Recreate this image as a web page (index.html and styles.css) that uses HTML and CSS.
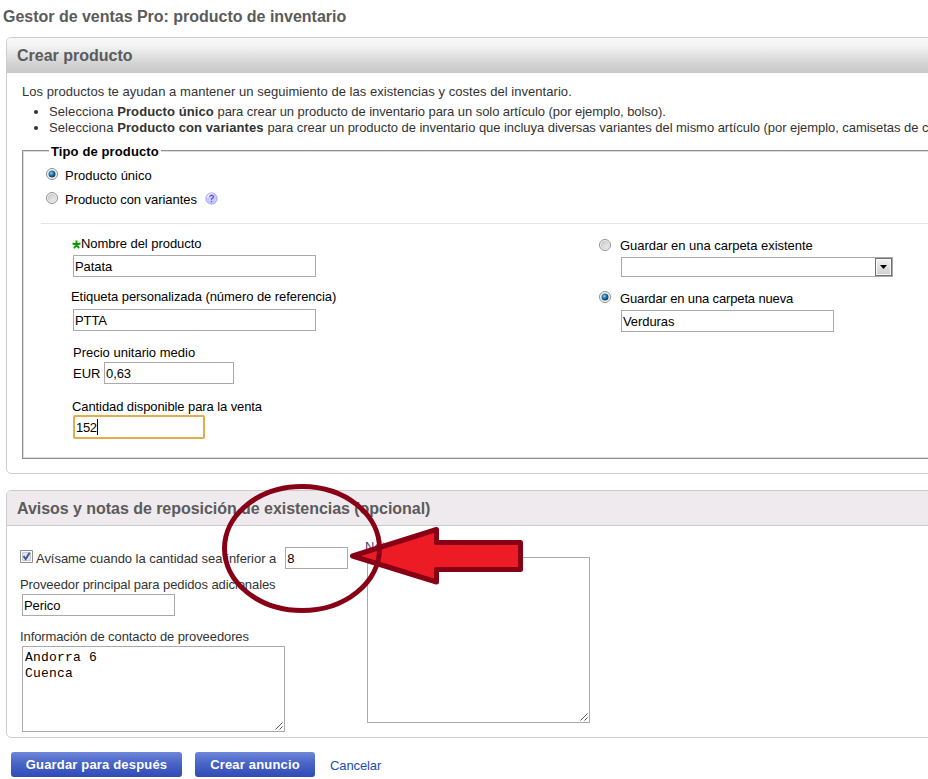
FILE: index.html
```html
<!DOCTYPE html>
<html lang="es">
<head>
<meta charset="utf-8">
<title>Gestor de ventas Pro</title>
<link rel="stylesheet" href="styles.css">
</head>
<body>
<svg class="defs" width="0" height="0">
  <defs>
    <radialGradient id="bead" cx=".4" cy=".38" r=".62"><stop offset="0" stop-color="#8fe0fa"/><stop offset=".4" stop-color="#2b86ba"/><stop offset="1" stop-color="#11365a"/></radialGradient>
    <linearGradient id="hollow" x1="0" y1="0" x2="1" y2="1"><stop offset="0" stop-color="#c4c4c4"/><stop offset="1" stop-color="#f4f4f4"/></linearGradient>
    <symbol id="radio-off" viewBox="0 0 12 12"><circle cx="6" cy="6" r="5.5" fill="#f6f6f6" stroke="#8e8f8f"/><circle cx="6" cy="6" r="3.800" fill="url(#hollow)" stroke="#c8c8c8" stroke-width=".6"/></symbol>
    <symbol id="radio-on" viewBox="0 0 12 12"><circle cx="6" cy="6" r="5.5" fill="#f6f6f6" stroke="#8e8f8f"/><circle cx="6" cy="6" r="3.500" fill="url(#bead)"/></symbol>
  </defs>
</svg>
<h1 class="page-title">Gestor de ventas Pro: producto de inventario</h1>

<section class="panel product">
  <h2 class="panel-head silver">Crear producto</h2>
  <p class="intro">Los productos te ayudan a mantener un seguimiento de las existencias y costes del inventario.</p>
  <ul class="hints">
    <li class="hint-single"><span class="lead">Selecciona <b>Producto único</b> </span>para crear un producto de inventario para un solo artículo (por ejemplo, bolso).</li>
    <li class="hint-multi"><span class="lead">Selecciona <b>Producto con variantes</b> </span>para crear un producto de inventario que incluya diversas variantes del mismo artículo (por ejemplo, camisetas de c</li>
  </ul>
  <div class="group">
    <div class="legend"><span>Tipo de producto</span></div>
    <div class="choice"><svg class="radio"><use href="#radio-on"/></svg><span class="t-unico">Producto único</span></div>
    <div class="choice"><svg class="radio"><use href="#radio-off"/></svg><span class="t-variantes">Producto con variantes</span>
      <svg class="help" width="13" height="13" viewBox="0 0 13 13"><circle cx="6.5" cy="6.5" r="5.600" fill="#c9c9ff" stroke="#a3a3f5"/><path d="M1.800 6A4.800 4.800 0 0 1 9 2.200Q5 3 1.800 6" fill="#fff"/><path d="M4.700 4.800Q4.800 3.200 6.700 3.200Q8.500 3.300 8.400 4.800Q8.300 5.800 7.200 6.300Q6.500 6.700 6.500 7.700M6.500 9v1.200" fill="none" stroke="#5454e4" stroke-width="1.300"/></svg>
    </div>
    <div class="fields">
      <div class="col-left">
        <label class="lbl l-name"><svg class="star" width="9" height="9" viewBox="0 0 9 9"><path d="M4.500 .5v4M.5 3.500L4.500 4.500L8.500 3.500M2 8.200L4.500 4.500L7 8.200" stroke="#090" stroke-width="1.900" fill="none"/></svg><span class="t-nombre">Nombre del producto</span></label>
        <div class="input w243">Patata</div>
        <label class="lbl l-tag"><span class="t-etiqueta">Etiqueta personalizada (número de referencia)</span></label>
        <div class="input w243">PTTA</div>
        <label class="lbl l-price"><span class="t-precio">Precio unitario medio</span></label>
        <div class="price"><span class="eur">EUR</span><div class="input w130">0,63</div></div>
        <label class="lbl l-qty"><span class="t-cantidad">Cantidad disponible para la venta</span></label>
        <div class="input focus">152<i class="caret"></i></div>
      </div>
      <div class="col-right">
        <div class="folder"><svg class="radio"><use href="#radio-off"/></svg><span class="t-existente">Guardar en una carpeta existente</span></div>
        <div class="select"><span class="drop"><svg width="7" height="4" viewBox="0 0 7 4"><path d="M0 0h7L3.500 4z" fill="#000"/></svg></span></div>
        <div class="folder second"><svg class="radio"><use href="#radio-on"/></svg><span class="t-nueva">Guardar en una carpeta nueva</span></div>
        <div class="input w213">Verduras</div>
      </div>
    </div>
  </div>
</section>

<section class="panel restock">
  <h2 class="panel-head rose">Avisos y notas de reposición de existencias (opcional)</h2>
  <div class="notes">
    <div class="supplier">
      <div class="alert">
        <svg class="check" width="13" height="13" viewBox="0 0 13 13"><path d="M.5.5h12v12H.5z" fill="#fafafa" stroke="#8e8f8f"/><path d="M2.500 2.500h8v8h-8z" fill="#dfe3ea" stroke="#c5c9d1"/><path d="M3.500 6.200L5.700 9L9.600 2.800" fill="none" stroke="#3f5596" stroke-width="1.900"/></svg>
        <span class="t-avisame">Avísame cuando la cantidad sea inferior a</span>
        <div class="input w63">8</div>
      </div>
      <label class="lbl l-prov"><span class="t-proveedor">Proveedor principal para pedidos adicionales</span></label>
      <div class="input w153">Perico</div>
      <label class="lbl l-info"><span class="t-info">Información de contacto de proveedores</span></label>
      <div class="area contact">Andorra 6<br>Cuenca<svg class="grip" width="9" height="9" viewBox="0 0 9 9"><path d="M.5 7.500l7-7M4.500 7.500l3-3" stroke="#555"/></svg></div>
    </div>
    <div class="memo">
      <label class="lbl"><span>Notas</span></label>
      <div class="area tall"><svg class="grip" width="9" height="9" viewBox="0 0 9 9"><path d="M.5 7.500l7-7M4.500 7.500l3-3" stroke="#555"/></svg></div>
    </div>
  </div>
</section>

<div class="actions">
  <a class="btn save"><span class="t-guardar">Guardar para después</span></a>
  <a class="btn create"><span class="t-crear">Crear anuncio</span></a>
  <a class="cancel">Cancelar</a>
</div>

<svg class="callout" width="310" height="134" viewBox="218 482 310 134">
  <path d="M352.500 556L436.500 529.500V542.500H520.500V569.500H436.500V582Z" fill="#ed1c24" stroke="#880015" stroke-width="5" stroke-linejoin="round"/>
  <ellipse cx="302" cy="548.5" rx="77.500" ry="62" fill="none" stroke="#880015" stroke-width="5"/>
</svg>
</body>
</html>
```
FILE: styles.css
```css
* { box-sizing: border-box; }
html, body { margin: 0; padding: 0; }
body {
  position: relative;
  width: 928px;
  height: 779px;
  overflow: hidden;
  background: #fff;
  color: #333;
  font: 13px/16px "Liberation Sans", Arial, sans-serif;
  white-space: nowrap;
}
h1, h2, p, ul { margin: 0; padding: 0; }
i { font-style: normal; }
span { flex: none; }
.defs { position: absolute; }

.page-title { height: 37px; padding: 7px 0 0 3px; color: #5b5b5b; font-size: 16px; line-height: 20px; letter-spacing: -.02px; }

.panel { margin-left: 6px; width: 960px; border: 1px solid #ccc; border-radius: 5px; background: #fff; overflow: hidden; }
.product { height: 437px; }
.restock { height: 248px; margin-top: 16px; }
.panel-head { height: 35px; padding-left: 10px; color: #5b5b5b; font-size: 16px; line-height: 35px; }
.silver { background: linear-gradient(#f8f8f8 0, #f4f4f4 22%, #d2d2d2 75%, #c9c9c9 100%); }
.rose { background: #efeaed; border-bottom: 1px solid #ccc; letter-spacing: -.04px; }

.intro { padding: 11px 0 0 15px; letter-spacing: .045px; }
.hints { padding: 4px 0 0 42px; list-style: disc; }
.hint-single { letter-spacing: -.06px; }
.hint-multi { letter-spacing: -.045px; }
.lead { letter-spacing: .09px; }

.group { height: 309px; margin: 14px 0 0 15px; border: 1px solid #8f8f8f; box-shadow: inset 1px 1px #ddd, inset 0 -1px #ddd; }
.legend { display: flex; height: 16px; margin: -8px 0 0 26px; color: #000; font-weight: bold; }
.legend span { padding: 1px 2px 0; background: #fff; letter-spacing: .12px; }
.choice { display: flex; height: 24px; padding-left: 23px; align-items: center; color: #000; }
.choice span { padding-top: 2px; }
.legend + .choice { margin-top: 4px; }
.choice .radio { margin: -2px 7px 0 0; }
.help { margin: -2px 0 0 8px; }
.radio { flex: none; width: 12px; height: 12px; }

.fields { display: flex; margin: 12px 0 0 18px; border-top: 1px solid #e4e4e4; color: #000; }
.col-left { width: 558px; padding: 12px 0 0 32px; }
.col-right { padding-top: 13px; }
.lbl { display: flex; height: 16px; align-items: center; }
.star { margin: 0 0 0 -1px; }
.l-name { margin-bottom: 3px; }
.l-tag { margin: 12px 0 4px -2px; }
.l-price { margin: 13px 0 2px; padding-top: 1px; }
.l-qty { margin: 15px 0 0 -1px; }
.input { width: 243px; height: 22px; padding-left: 1px; border: 1px solid #a9a9ae; background: #fff; color: #000; line-height: 21px; letter-spacing: -.08px; }
.w130 { width: 130px; }
.w213 { width: 213px; margin-left: 22px; }
.w63 { width: 63px; }
.w153 { width: 153px; margin-left: 2px; }
.price { display: flex; align-items: center; }
.eur { width: 31px; padding-top: 1px; }
.focus { display: flex; align-items: center; width: 132px; height: 24px; border: 2px solid #e0ae4c; border-radius: 2px; letter-spacing: -.3px; }
.caret { width: 1px; height: 16px; background: #000; }
.folder { display: flex; height: 18px; align-items: center; }
.folder .radio { margin: -2px 9px 0 0; }
.folder.second { margin-top: 12px; margin-bottom: 3px; }
.folder.second span { padding-top: 2px; }
.select { display: flex; justify-content: flex-end; width: 272px; height: 20px; margin: 2px 0 0 22px; border: 1px solid #a9a9a9; }
.drop { display: flex; align-items: center; justify-content: center; width: 17px; height: 18px; border: 1px solid #707070; background: linear-gradient(#f2f2f2, #cfcfcf); box-shadow: inset 0 0 0 1px #f8f8f8; }

.t-variantes, .t-nombre { letter-spacing: -.05px; }
.t-etiqueta { letter-spacing: -.065px; }
.t-cantidad { letter-spacing: -.09px; }
.t-existente { letter-spacing: -.03px; }
.t-nueva { letter-spacing: -.14px; }
.t-avisame { letter-spacing: -.04px; }
.t-proveedor { letter-spacing: -.09px; }
.t-info { letter-spacing: -.1px; }
.t-guardar { letter-spacing: .17px; }
.t-crear { letter-spacing: .17px; }

.notes { display: flex; }
.supplier { width: 345px; padding: 21px 0 0 13px; }
.alert { display: flex; height: 22px; align-items: center; }
.alert span { padding-top: 2px; }
.check { margin: -3px 3px 0 0; }
.alert .input { margin-left: 9px; }
.l-prov { margin: 7px 0 2px; padding-top: 2px; }
.l-info { margin: 12px 0 2px; padding-top: 2px; }
.area { position: relative; border: 1px solid #a9a9ae; background: #fff; color: #000; font-family: "Liberation Mono", monospace; }
.contact { width: 263px; height: 86px; margin-left: 2px; padding: 3px 2px; letter-spacing: .2px; }
.memo { padding: 13px 0 0 13px; color: #4a3a78; }
.tall { width: 223px; height: 166px; margin: 2px 0 0 2px; }
.grip { position: absolute; right: 0; bottom: 0; }

.actions { display: flex; align-items: center; margin: 14px 0 0 11px; height: 25px; }
.btn { display: flex; align-items: center; justify-content: center; height: 25px; border-radius: 3px; background: linear-gradient(#6f87d8, #4865c7 45%, #304bb5); color: #fff; font-weight: bold; }
.save { width: 171px; margin-right: 13px; }
.create { width: 120px; margin-right: 15px; }
.cancel { color: #1a4fb5; padding-top: 2px; letter-spacing: -.1px; }

.callout { position: absolute; left: 218px; top: 482px; }
```
